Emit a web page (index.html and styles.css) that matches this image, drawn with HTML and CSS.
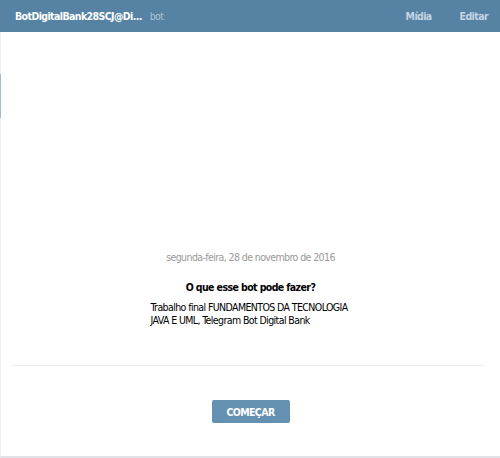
FILE: index.html
```html
<!DOCTYPE html>
<html>
<head>
<meta charset="utf-8">
<link rel="stylesheet" href="styles.css">
</head>
<body>
<div class="header">
  <div class="peer">
    <span class="name">BotDigitalBank28SCJ@Di...</span>
    <span class="status">bot</span>
  </div>
  <div class="actions">
    <span class="action">Mídia</span>
    <span class="action">Editar</span>
  </div>
</div>
<div class="main">
  <div class="scroll-mark"></div>
  <div class="history">
    <div class="date">segunda-feira, 28 de novembro de 2016</div>
    <div class="about">
      <div class="about-title">O que esse bot pode fazer?</div>
      <div class="about-text">Trabalho final FUNDAMENTOS DA TECNOLOGIA<br>JAVA E UML, Telegram Bot Digital Bank</div>
    </div>
  </div>
  <div class="divider"></div>
  <div class="footer">
    <button class="start">COMEÇAR</button>
  </div>
</div>
</body>
</html>
```
FILE: styles.css
```css
html, body {
  margin: 0;
  padding: 0;
  background: #ffffff;
  font-family: "DejaVu Sans Condensed", "DejaVu Sans", sans-serif;
  font-stretch: condensed;
  font-size: 10.5px;
  letter-spacing: -0.6px;
}
.header {
  height: 32px;
  background: #5682a3;
  display: flex;
  align-items: center;
  justify-content: space-between;
  padding: 0 12px 0 15px;
}
.peer {
  display: flex;
  align-items: baseline;
  gap: 8px;
}
.name {
  color: #ffffff;
  font-weight: bold;
}
.status {
  color: #a8c2d6;
}
.actions {
  display: flex;
  gap: 28px;
}
.action {
  color: #c3d5e4;
  font-weight: bold;
}
.main {
  position: relative;
  height: 424px;
  border-left: 1px solid #f0f0f0;
  border-bottom: 2px solid #dfe3e8;
  display: flex;
  flex-direction: column;
}
.scroll-mark {
  position: absolute;
  left: -1px;
  top: 42px;
  width: 1px;
  height: 44px;
  background: #9fbfd8;
}
.history {
  flex: 1;
  display: flex;
  flex-direction: column;
  justify-content: flex-end;
  align-items: center;
  padding-bottom: 38px;
}
.date {
  color: #999999;
  text-align: center;
  line-height: 13px;
  margin-bottom: 17px;
}
.about {
  width: 200px;
  color: #000000;
}
.about-title {
  font-weight: bold;
  text-align: center;
  line-height: 13px;
  margin-bottom: 7px;
}
.about-text {
  line-height: 13px;
  white-space: nowrap;
}
.divider {
  height: 1px;
  background: #ececec;
  margin: 0 16px 0 11px;
}
.footer {
  height: 90px;
  display: flex;
  justify-content: center;
  align-items: flex-start;
  padding-top: 34px;
  box-sizing: border-box;
}
.start {
  width: 78px;
  height: 23px;
  border: none;
  border-radius: 2px;
  background: #6490b1;
  color: #ffffff;
  font-family: "DejaVu Sans Condensed", "DejaVu Sans", sans-serif;
  font-stretch: condensed;
  font-weight: bold;
  font-size: 10.5px;
  letter-spacing: -0.6px;
  padding: 0;
}
```
